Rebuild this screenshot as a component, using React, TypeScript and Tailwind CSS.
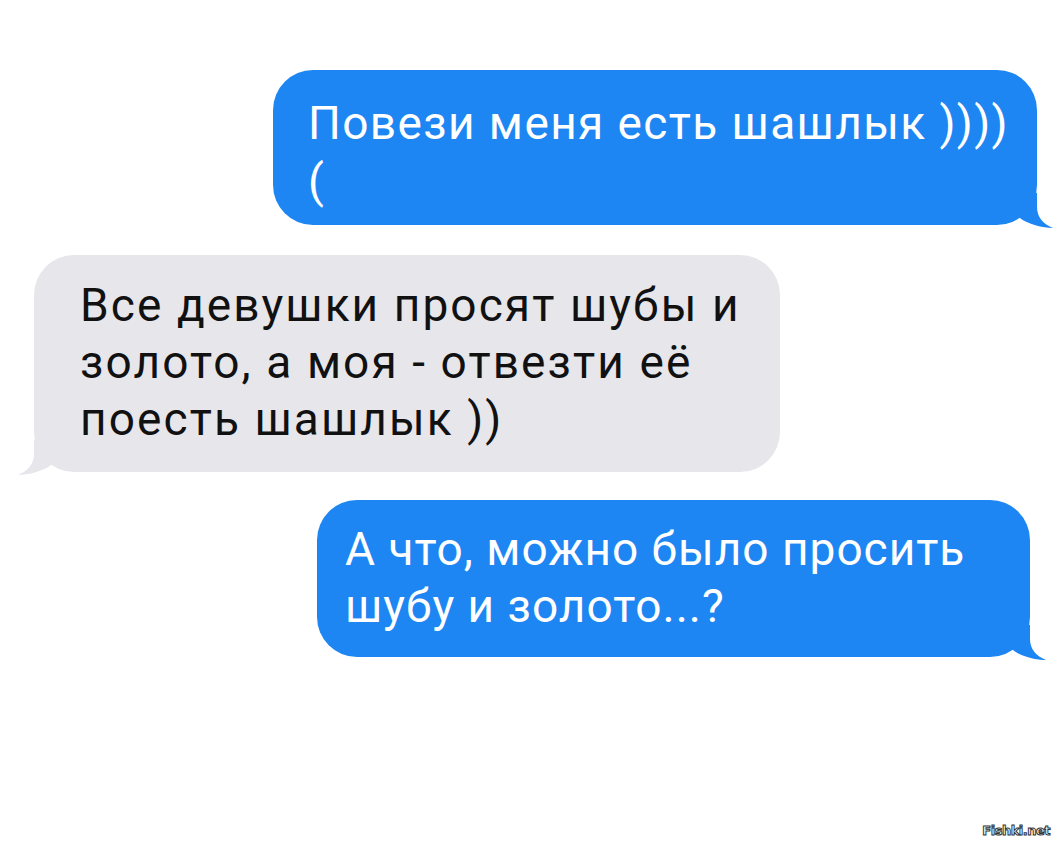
const BLUE = '#1d86f2';
const GRAY = '#e6e6eb';

// tail that hangs off the bottom-right corner of a sent bubble
function SentTail({ color }: { color: string }) {
  return (
    <svg className="absolute right-[-16px] bottom-[-3px]" width="40" height="35" viewBox="0 0 40 35">
      <path d="M0 0 L24 0 L24 14 C24 24 30 31 40 35 C30 35 14 31 7 25 Z" fill={color} />
    </svg>
  );
}

// mirrored tail for a received bubble
function ReceivedTail({ color }: { color: string }) {
  return (
    <svg className="absolute left-[-16px] bottom-[-3px]" width="40" height="35" viewBox="0 0 40 35">
      <path d="M40 0 L16 0 L16 14 C16 24 10 31 0 35 C10 35 26 31 33 25 Z" fill={color} />
    </svg>
  );
}

export default function App() {
  return (
    <div
      className="relative w-[1057px] h-[849px] bg-white overflow-hidden"
      style={{ fontFamily: 'Roboto, "Liberation Sans", Arial, sans-serif' }}
    >
      <div className="flex flex-col pt-[70px] text-[46px] leading-[58px]">
        <div className="flex justify-end pr-[20px]">
          <div className="relative w-[764px] h-[155px] rounded-[40px] bg-[#1d86f2] pl-[35px] pt-[24px] text-white tracking-[1.4px]">
            <div>Повези меня есть шашлык ))))</div>
            <div>(</div>
            <SentTail color={BLUE} />
          </div>
        </div>

        <div className="flex justify-start pl-[34px] mt-[30px]">
          <div className="relative w-[746px] h-[217px] rounded-[40px] bg-[#e6e6eb] pl-[46px] pt-[22px] text-[#111] leading-[57px] tracking-[2.1px]">
            <div>Все девушки просят шубы и</div>
            <div>золото, а моя - отвезти её</div>
            <div>поесть шашлык ))</div>
            <ReceivedTail color={GRAY} />
          </div>
        </div>

        <div className="flex justify-end pr-[27px] mt-[28px]">
          <div className="relative w-[713px] h-[157px] rounded-[40px] bg-[#1d86f2] pl-[28px] pt-[21px] text-white leading-[57px] tracking-[1px]">
            <div>А что, можно было просить</div>
            <div>шубу и золото...?</div>
            <SentTail color={BLUE} />
          </div>
        </div>
      </div>

      <div
        className="absolute right-[7px] bottom-[9px] text-[13px] font-bold text-white tracking-[-0.5px] [-webkit-text-stroke:1px_#333]"
        style={{ fontFamily: '"DejaVu Sans", sans-serif' }}
      >
        Fishki.net
      </div>
    </div>
  );
}
